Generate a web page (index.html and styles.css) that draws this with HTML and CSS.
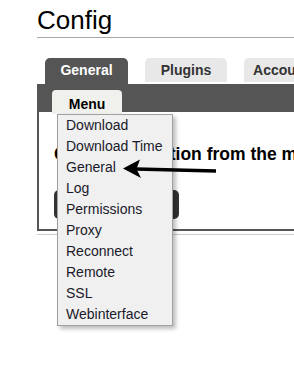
FILE: index.html
```html
<!DOCTYPE html>
<html lang="en">
<head>
    <meta charset="UTF-8">
    <meta name="viewport" content="width=device-width, initial-scale=1.0">
    <title>Config</title>
    <link rel="stylesheet" href="styles.css">
</head>
<body>
    <div class="page">
        <h1>Config</h1>

        <!-- Pestañas de configuración -->
        <div class="tabs">
            <div class="tab active">General</div>
            <div class="tab">Plugins</div>
            <div class="tab">Accounts</div>
        </div>

        <div class="panel">
            <div class="panel-bar">
                <div class="menu-tab">Menu</div>
            </div>
            <div class="panel-body">
                <h3>Choose an option from the menu</h3>
                <div class="dark-button"></div>
            </div>
        </div>
        <div class="rule"></div>
    </div>

    <!-- Menú desplegable -->
    <ul class="dropdown">
        <li>Download</li>
        <li>Download Time</li>
        <li>General</li>
        <li>Log</li>
        <li>Permissions</li>
        <li>Proxy</li>
        <li>Reconnect</li>
        <li>Remote</li>
        <li>SSL</li>
        <li>Webinterface</li>
    </ul>

    <svg class="arrow" width="100" height="26" viewBox="0 0 100 26">
        <line x1="16" y1="14" x2="96" y2="16" stroke="#000" stroke-width="3.5"/>
        <polygon points="3,13.5 20,4.5 16.5,14 21,23" fill="#000"/>
    </svg>
</body>
</html>
```

FILE: styles.css
```css
html, body {
    overflow: hidden;
}
body {
    font-family: "Liberation Sans", Arial, sans-serif;
    margin: 0;
    padding: 0 0 0 37px;
    background-color: #fff;
    color: #000;
}
.page {
    width: 420px;
}
h1 {
    margin: 6px 0 0;
    font-size: 26px;
    font-weight: normal;
    line-height: 29px;
    padding-bottom: 2px;
    border-bottom: 1px solid #a8a8a8;
}
.tabs {
    display: flex;
    align-items: flex-start;
    gap: 17px;
    margin-top: 20px;
    padding-left: 8px;
}
.tab {
    width: 82px;
    height: 24px;
    box-sizing: border-box;
    padding-top: 4px;
    line-height: 16px;
    font-size: 14px;
    font-weight: bold;
    text-align: center;
    color: #333;
    background-color: #e8e8e8;
    border-radius: 5px 5px 0 0;
}
.tab.active {
    width: 83px;
    height: 26px;
    background-color: #555;
    color: #fff;
}
.panel {
    border: 2px solid #555;
    border-top: none;
}
.panel-bar {
    height: 28px;
    box-sizing: border-box;
    padding: 6px 0 0 15px;
    margin-left: -2px;
    background-color: #555;
}
.menu-tab {
    width: 70px;
    height: 24px;
    box-sizing: border-box;
    padding-top: 6px;
    line-height: 16px;
    font-size: 14px;
    font-weight: bold;
    text-align: center;
    background-color: #f0f0ec;
    border-radius: 4px 4px 0 0;
}
.panel-body {
    padding: 32px 15px 10px;
}
.panel-body h3 {
    margin: 0;
    font-size: 17.5px;
    line-height: 20px;
    white-space: nowrap;
}
.dark-button {
    margin-top: 26px;
    width: 125px;
    height: 29px;
    background-color: #333;
    border-radius: 5px;
}
.rule {
    margin-top: 3px;
    border-top: 1px solid #ccc;
}
.dropdown {
    position: absolute;
    left: 57px;
    top: 114px;
    width: 114px;
    margin: 0;
    padding: 0;
    list-style: none;
    background-color: #f0f0f0;
    border: 1px solid #a0a0a0;
    box-shadow: 3px 3px 4px rgba(0, 0, 0, 0.25);
}
.dropdown li {
    padding-left: 8px;
    line-height: 21px;
    font-size: 14px;
    color: #1a1a2a;
    white-space: nowrap;
}
.arrow {
    position: absolute;
    left: 120px;
    top: 155px;
}
```
